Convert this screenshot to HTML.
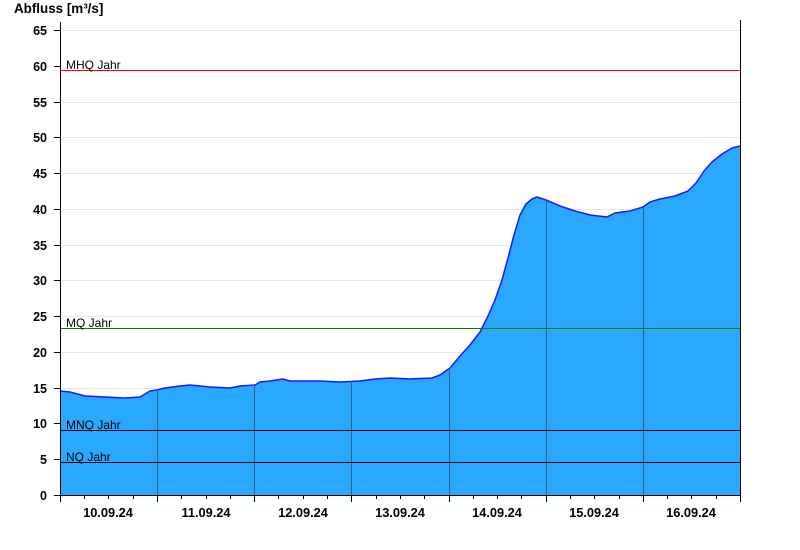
<!DOCTYPE html>
<html><head><meta charset="utf-8"><style>
html,body{margin:0;padding:0;background:#fff;width:800px;height:550px;overflow:hidden}
svg{display:block}
text{font-family:"Liberation Sans",Arial,sans-serif}
</style></head><body>
<svg width="800" height="550" viewBox="0 0 800 550">
<text x="14" y="13" font-size="13.4" font-weight="bold" fill="#000">Abfluss [m³/s]</text>
<g stroke="#e6e6e6" stroke-width="1">
<line x1="60" y1="30.5" x2="740" y2="30.5"/>
<line x1="60" y1="102.5" x2="740" y2="102.5"/>
<line x1="60" y1="137.5" x2="740" y2="137.5"/>
<line x1="60" y1="173.5" x2="740" y2="173.5"/>
<line x1="60" y1="209.5" x2="740" y2="209.5"/>
<line x1="60" y1="245.5" x2="740" y2="245.5"/>
<line x1="60" y1="280.5" x2="740" y2="280.5"/>
<line x1="60" y1="316.5" x2="740" y2="316.5"/>
<line x1="60" y1="352.5" x2="740" y2="352.5"/>
<line x1="60" y1="388.5" x2="740" y2="388.5"/>
</g>
<path d="M60,391 L70,392 L85,396 L105,397 L125,398 L140,397 L150,391 L157,390 L165,388 L180,386 L190,385 L210,387 L230,388 L240,386 L255,385 L260,382 L270,381 L283,379 L290,381 L320,381 L340,382 L360,381 L375,379 L390,378 L410,379 L432,378 L440,375 L450,368 L460,356 L470,345 L480,332 L488,316 L495,300 L502,280 L508,258 L514,235 L520,215 L526,204 L532,199 L537,197 L546,200 L560,206 L575,211 L590,215 L607,217 L615,213 L630,211 L643,207 L650,202 L660,199 L675,196 L688,191 L696,183 L704,171 L712,162 L722,154 L732,148 L740,146 L740,495 L60,495 Z" fill="#2aa8ff" stroke="none"/>
<path d="M60,391 L70,392 L85,396 L105,397 L125,398 L140,397 L150,391 L157,390 L165,388 L180,386 L190,385 L210,387 L230,388 L240,386 L255,385 L260,382 L270,381 L283,379 L290,381 L320,381 L340,382 L360,381 L375,379 L390,378 L410,379 L432,378 L440,375 L450,368 L460,356 L470,345 L480,332 L488,316 L495,300 L502,280 L508,258 L514,235 L520,215 L526,204 L532,199 L537,197 L546,200 L560,206 L575,211 L590,215 L607,217 L615,213 L630,211 L643,207 L650,202 L660,199 L675,196 L688,191 L696,183 L704,171 L712,162 L722,154 L732,148 L740,146" fill="none" stroke="#1a1aff" stroke-width="1.5" stroke-linejoin="round"/>
<g stroke="#2a6384" stroke-width="1">
<line x1="157.5" y1="390" x2="157.5" y2="495"/>
<line x1="254.5" y1="385" x2="254.5" y2="495"/>
<line x1="351.5" y1="381" x2="351.5" y2="495"/>
<line x1="449.5" y1="368" x2="449.5" y2="495"/>
<line x1="546.5" y1="200" x2="546.5" y2="495"/>
<line x1="643.5" y1="207" x2="643.5" y2="495"/>
</g>
<line x1="60" y1="70.5" x2="740" y2="70.5" stroke="#ff0000"/>
<line x1="60" y1="328.5" x2="740" y2="328.5" stroke="#008000"/>
<line x1="60" y1="430.5" x2="740" y2="430.5" stroke="#000"/>
<line x1="60" y1="462.5" x2="740" y2="462.5" stroke="#000"/>
<g font-size="12" fill="#000">
<text x="66" y="69">MHQ Jahr</text>
<text x="66" y="327">MQ Jahr</text>
<text x="66" y="429">MNQ Jahr</text>
<text x="66" y="461">NQ Jahr</text>
</g>
<line x1="60.5" y1="22" x2="60.5" y2="495" stroke="#000"/>
<line x1="740.5" y1="20" x2="740.5" y2="495" stroke="#000"/>
<line x1="60" y1="495.5" x2="741" y2="495.5" stroke="#000"/>
<g stroke="#000">
<line x1="54" y1="30.5" x2="60" y2="30.5"/><line x1="54" y1="66.5" x2="60" y2="66.5"/><line x1="54" y1="102.5" x2="60" y2="102.5"/><line x1="54" y1="137.5" x2="60" y2="137.5"/><line x1="54" y1="173.5" x2="60" y2="173.5"/><line x1="54" y1="209.5" x2="60" y2="209.5"/><line x1="54" y1="245.5" x2="60" y2="245.5"/><line x1="54" y1="280.5" x2="60" y2="280.5"/><line x1="54" y1="316.5" x2="60" y2="316.5"/><line x1="54" y1="352.5" x2="60" y2="352.5"/><line x1="54" y1="388.5" x2="60" y2="388.5"/><line x1="54" y1="423.5" x2="60" y2="423.5"/><line x1="54" y1="459.5" x2="60" y2="459.5"/><line x1="54" y1="495.5" x2="60" y2="495.5"/>
</g>
<g stroke="#000">
<line x1="60.5" y1="495" x2="60.5" y2="502"/><line x1="84.5" y1="495" x2="84.5" y2="499"/><line x1="108.5" y1="495" x2="108.5" y2="499"/><line x1="133.5" y1="495" x2="133.5" y2="499"/>
<line x1="157.5" y1="495" x2="157.5" y2="502"/><line x1="181.5" y1="495" x2="181.5" y2="499"/><line x1="206.5" y1="495" x2="206.5" y2="499"/><line x1="230.5" y1="495" x2="230.5" y2="499"/>
<line x1="254.5" y1="495" x2="254.5" y2="502"/><line x1="278.5" y1="495" x2="278.5" y2="499"/><line x1="303.5" y1="495" x2="303.5" y2="499"/><line x1="327.5" y1="495" x2="327.5" y2="499"/>
<line x1="351.5" y1="495" x2="351.5" y2="502"/><line x1="376.5" y1="495" x2="376.5" y2="499"/><line x1="400.5" y1="495" x2="400.5" y2="499"/><line x1="424.5" y1="495" x2="424.5" y2="499"/>
<line x1="449.5" y1="495" x2="449.5" y2="502"/><line x1="473.5" y1="495" x2="473.5" y2="499"/><line x1="497.5" y1="495" x2="497.5" y2="499"/><line x1="521.5" y1="495" x2="521.5" y2="499"/>
<line x1="546.5" y1="495" x2="546.5" y2="502"/><line x1="570.5" y1="495" x2="570.5" y2="499"/><line x1="594.5" y1="495" x2="594.5" y2="499"/><line x1="619.5" y1="495" x2="619.5" y2="499"/>
<line x1="643.5" y1="495" x2="643.5" y2="502"/><line x1="667.5" y1="495" x2="667.5" y2="499"/><line x1="691.5" y1="495" x2="691.5" y2="499"/><line x1="716.5" y1="495" x2="716.5" y2="499"/>
<line x1="740.5" y1="495" x2="740.5" y2="502"/>
</g>
<g font-size="12.5" font-weight="bold" fill="#000" text-anchor="end">
<text x="47" y="35">65</text><text x="47" y="71">60</text><text x="47" y="107">55</text><text x="47" y="142">50</text><text x="47" y="178">45</text><text x="47" y="214">40</text><text x="47" y="250">35</text><text x="47" y="285">30</text><text x="47" y="321">25</text><text x="47" y="357">20</text><text x="47" y="393">15</text><text x="47" y="428">10</text><text x="47" y="464">5</text><text x="47" y="500">0</text>
</g>
<g font-size="12.8" font-weight="bold" fill="#000" text-anchor="middle">
<text x="108" y="517">10.09.24</text><text x="206" y="517">11.09.24</text><text x="303" y="517">12.09.24</text><text x="400" y="517">13.09.24</text><text x="497" y="517">14.09.24</text><text x="594" y="517">15.09.24</text><text x="691" y="517">16.09.24</text>
</g>
</svg>
</body></html>
